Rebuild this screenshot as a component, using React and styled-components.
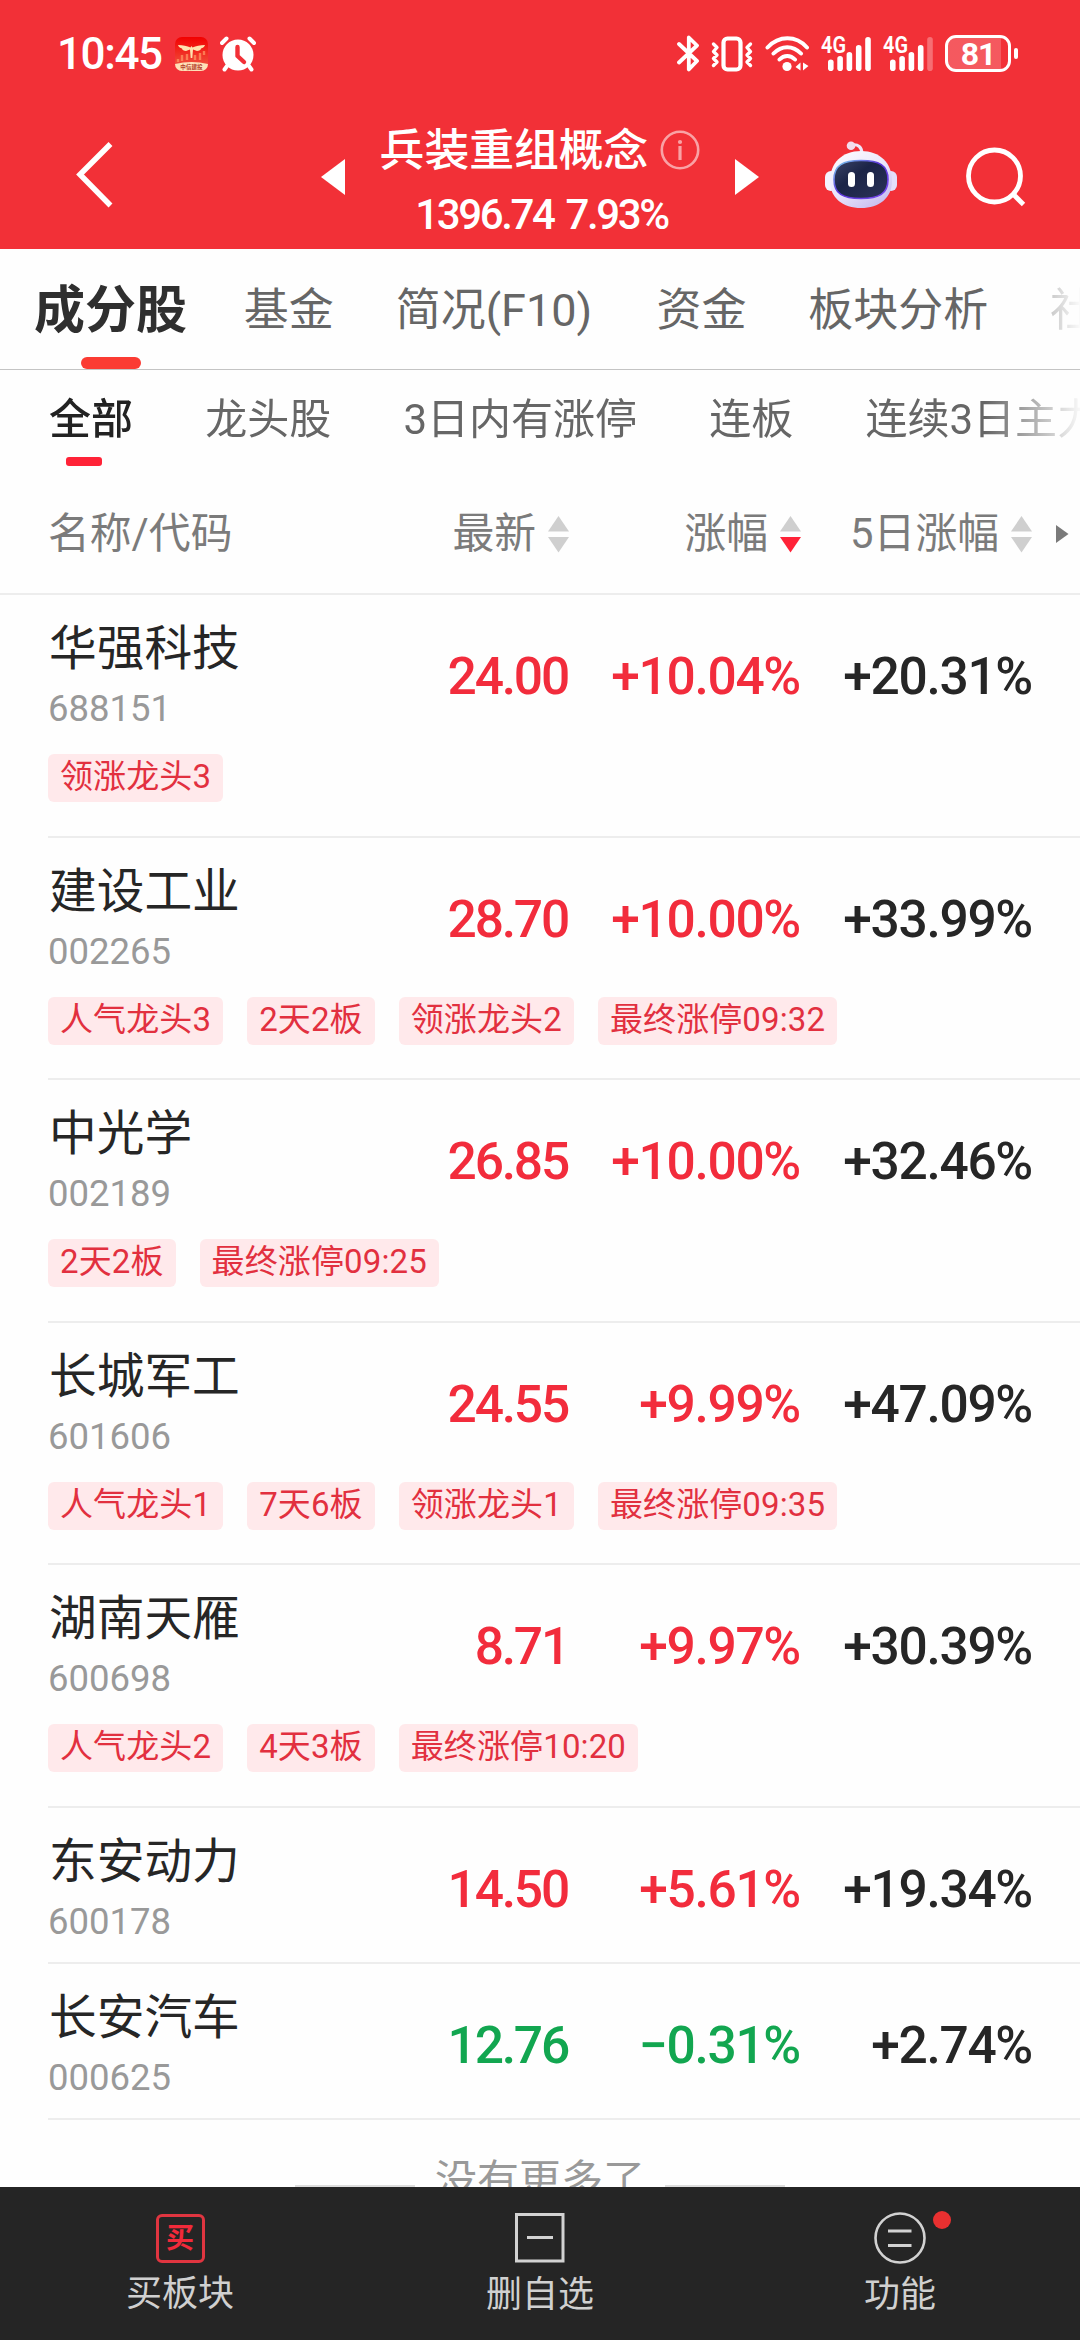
import styled, { createGlobalStyle } from "styled-components";
import { useState } from "react";

const tabs = [
  { label: "成分股", width: 153 },
  { label: "基金", width: 90 },
  { label: "简况(F10)", width: 199 },
  { label: "资金", width: 90 },
  { label: "板块分析", width: 180 },
  { label: "社区", width: 90 },
];

const filters = ["全部", "龙头股", "3日内有涨停", "连板", "连续3日主力净流入"];

const stocks = [
  {
    name: "华强科技",
    code: "688151",
    price: "24.00",
    change: "+10.04%",
    fiveDay: "+20.31%",
    tags: ["领涨龙头3"],
  },
  {
    name: "建设工业",
    code: "002265",
    price: "28.70",
    change: "+10.00%",
    fiveDay: "+33.99%",
    tags: ["人气龙头3", "2天2板", "领涨龙头2", "最终涨停09:32"],
  },
  {
    name: "中光学",
    code: "002189",
    price: "26.85",
    change: "+10.00%",
    fiveDay: "+32.46%",
    tags: ["2天2板", "最终涨停09:25"],
  },
  {
    name: "长城军工",
    code: "601606",
    price: "24.55",
    change: "+9.99%",
    fiveDay: "+47.09%",
    tags: ["人气龙头1", "7天6板", "领涨龙头1", "最终涨停09:35"],
  },
  {
    name: "湖南天雁",
    code: "600698",
    price: "8.71",
    change: "+9.97%",
    fiveDay: "+30.39%",
    tags: ["人气龙头2", "4天3板", "最终涨停10:20"],
  },
  {
    name: "东安动力",
    code: "600178",
    price: "14.50",
    change: "+5.61%",
    fiveDay: "+19.34%",
    tags: [],
  },
  {
    name: "长安汽车",
    code: "000625",
    price: "12.76",
    change: "−0.31%",
    fiveDay: "+2.74%",
    tags: [],
  },
];

export default function App() {
  const [activeTab, setActiveTab] = useState("成分股");
  const [activeFilter, setActiveFilter] = useState("全部");

  return (
    <StyledScreen>
      <GlobalStyle />
      <StyledHeader>
        <StatusBar />
        <StyledNav>
          <StyledNavLeft>
            <BackIcon />
          </StyledNavLeft>
          <StyledNavCenter>
            <TriangleIcon points="24,0 24,36 0,18" />
            <StyledTitleBlock>
              <StyledTitleRow>
                <StyledTitle>兵装重组概念</StyledTitle>
                <InfoIcon />
              </StyledTitleRow>
              <StyledIndexValue>1396.74 7.93%</StyledIndexValue>
            </StyledTitleBlock>
            <TriangleIcon points="0,0 24,18 0,36" />
          </StyledNavCenter>
          <StyledNavRight>
            <RobotIcon />
            <SearchIcon />
          </StyledNavRight>
        </StyledNav>
      </StyledHeader>

      <StyledTabs>
        {tabs.map((tab) => (
          <StyledTab
            key={tab.label}
            $width={tab.width}
            $active={tab.label === activeTab}
            onClick={() => setActiveTab(tab.label)}
          >
            {tab.label}
          </StyledTab>
        ))}
      </StyledTabs>

      <StyledFilters>
        {filters.map((filter) => (
          <StyledFilter
            key={filter}
            $active={filter === activeFilter}
            onClick={() => setActiveFilter(filter)}
          >
            {filter}
          </StyledFilter>
        ))}
      </StyledFilters>

      <StyledTableHead>
        <span>名称/代码</span>
        <StyledHeadCell>
          最新
          <SortIcon />
        </StyledHeadCell>
        <StyledHeadCell>
          涨幅
          <SortIcon descending />
        </StyledHeadCell>
        <StyledHeadCell>
          5日涨幅
          <SortIcon />
        </StyledHeadCell>
        <svg width="13" height="18" viewBox="0 0 13 18">
          <polygon points="0,0 12.5,9 0,18" fill="#7a7a7a" />
        </svg>
      </StyledTableHead>

      <StyledList>
        {stocks.map((stock) => (
          <StockRow key={stock.code} stock={stock} />
        ))}
        <StyledListEnd>没有更多了</StyledListEnd>
      </StyledList>

      <StyledBottomBar>
        <StyledAction>
          <StyledBuyIcon>买</StyledBuyIcon>
          <StyledActionLabel>买板块</StyledActionLabel>
        </StyledAction>
        <StyledAction>
          <svg width="52" height="52" viewBox="0 0 52 52" fill="none">
            <rect x="2.5" y="2.5" width="46.5" height="46.5" stroke="#d2d2d2" strokeWidth="3" />
            <path d="M13 25.5H39" stroke="#d2d2d2" strokeWidth="3" />
          </svg>
          <StyledActionLabel>删自选</StyledActionLabel>
        </StyledAction>
        <StyledAction>
          <StyledIconWithDot>
            <svg width="52" height="52" viewBox="0 0 52 52" fill="none">
              <circle cx="26" cy="26" r="24.5" stroke="#d2d2d2" strokeWidth="2.6" />
              <path d="M14 19H37.5M14 33.5H37.5" stroke="#d2d2d2" strokeWidth="3" />
            </svg>
          </StyledIconWithDot>
          <StyledActionLabel>功能</StyledActionLabel>
        </StyledAction>
      </StyledBottomBar>
    </StyledScreen>
  );
}

function StockRow({ stock }) {
  const color = stock.change.startsWith("+") ? "#f22c3c" : "#12a650";

  return (
    <StyledRow $tall={stock.tags.length > 0}>
      <StyledQuote>
        <div>
          <StyledName>{stock.name}</StyledName>
          <StyledCode>{stock.code}</StyledCode>
        </div>
        <StyledPrice $color={color}>{stock.price}</StyledPrice>
        <StyledNumber $color={color}>{stock.change}</StyledNumber>
        <StyledNumber>{stock.fiveDay}</StyledNumber>
      </StyledQuote>
      {stock.tags.length > 0 ? (
        <StyledTags>
          {stock.tags.map((tag) => (
            <StyledTag key={tag}>{tag}</StyledTag>
          ))}
        </StyledTags>
      ) : null}
    </StyledRow>
  );
}

function StatusBar() {
  return (
    <StyledStatusBar>
      <StyledStatusGroup>
        <StyledClock>10:45</StyledClock>
        <AppBadgeIcon />
        <AlarmIcon />
      </StyledStatusGroup>
      <StyledStatusGroup>
        <BluetoothIcon />
        <VibrateIcon />
        <WifiIcon />
        <SignalIcon level={5} />
        <SignalIcon level={4} />
        <StyledBattery>
          <StyledBatteryBody>81</StyledBatteryBody>
          <StyledBatteryNub />
        </StyledBattery>
      </StyledStatusGroup>
    </StyledStatusBar>
  );
}

function AppBadgeIcon() {
  return (
    <svg width="33" height="34" viewBox="0 0 33 34">
      <defs>
        <linearGradient id="badge" x1="0" y1="0" x2="0" y2="1">
          <stop offset="0" stopColor="#f20000" />
          <stop offset="1" stopColor="#f0604a" />
        </linearGradient>
        <clipPath id="badgeClip">
          <rect width="33" height="34" rx="7" />
        </clipPath>
      </defs>
      <g clipPath="url(#badgeClip)">
        <rect width="33" height="34" fill="url(#badge)" />
        <path
          d="M3 8C8 8 12 9 15.5 10.5L16.5 9L17.5 10.5C21 9 25 8 30 8C29.5 10 28 11 26 11.5C26 13 24 14 22 14L18 12.5L17.3 21H15.7L15 12.5L11 14C9 14 7 13 7 11.5C5 11 3.5 10 3 8Z"
          fill="#ffe3b0"
        />
        <path
          d="M3 22V25M7 18V24M12 17V23M20 18V23M25 16V23M29 14V18"
          stroke="#ff9a66"
          strokeWidth="2.4"
          opacity="0.7"
        />
        <path d="M0 27Q16.5 23 33 27V34H0Z" fill="#ffe0b8" />
        <text
          x="16.5"
          y="32"
          textAnchor="middle"
          fontSize="5.6"
          fontWeight="700"
          fontFamily="Noto Sans CJK SC, sans-serif"
          fill="#b5402c"
        >
          中信建投
        </text>
      </g>
    </svg>
  );
}

function AlarmIcon() {
  return (
    <svg width="36" height="36" viewBox="0 0 36 36" fill="none" strokeLinecap="round">
      <circle cx="18" cy="19" r="15.5" fill="#fff" />
      <path d="M2 7L6.5 2.5M34 7L29.5 2.5" stroke="#fff" strokeWidth="4" />
      <path d="M7 30L4.5 33.5M29 30L31.5 33.5" stroke="#fff" strokeWidth="4" />
      <path d="M17.5 11V20L24 26" stroke="#f23037" strokeWidth="4.4" strokeLinejoin="round" />
    </svg>
  );
}

function BluetoothIcon() {
  return (
    <svg width="22" height="37" viewBox="0 0 22 37" fill="none">
      <path
        d="M2 9L20 26L11.8 34.5V2.5L20 10.5L2 27.5"
        stroke="#fff"
        strokeWidth="3.8"
        strokeLinecap="round"
        strokeLinejoin="round"
      />
    </svg>
  );
}

function VibrateIcon() {
  return (
    <svg width="42" height="36" viewBox="0 0 42 36" fill="none" stroke="#fff">
      <rect x="12.5" y="2.5" width="17" height="31" rx="4" strokeWidth="4.2" />
      <path
        d="M2.5 8L6 11.5L2.5 15.5L6 19L2.5 22.5L6 26L2.5 29.5M39.5 8L36 11.5L39.5 15.5L36 19L39.5 22.5L36 26L39.5 29.5"
        strokeWidth="3.4"
        strokeLinecap="round"
        strokeLinejoin="round"
      />
    </svg>
  );
}

function WifiIcon() {
  return (
    <svg width="44" height="36" viewBox="0 0 44 36" fill="none" strokeLinecap="round">
      <path
        d="M2.5 11.5C14 -0.7 31 -0.7 42 11.5M8.5 17.5C16.5 9 28 9 36 17.5M14.5 23.5C19 18.7 25.5 18.7 30 23.5"
        stroke="#fff"
        strokeWidth="4"
      />
      <circle cx="22" cy="30.5" r="4.6" fill="#fff" />
      <path d="M35.5 26.5V34.5L30.5 31Z M38 26.5V34.5L43.5 30Z" fill="#fff" />
    </svg>
  );
}

function SignalIcon({ level }) {
  const tops = [23.5, 20, 16, 9, 1];

  return (
    <StyledSignal width="50" height="36" viewBox="0 0 50 36">
      <text
        x="0"
        y="17"
        fontFamily="Roboto, sans-serif"
        fontSize="23.5"
        fontWeight="600"
        textLength="25"
        lengthAdjust="spacingAndGlyphs"
        fill="#fff"
      >
        4G
      </text>
      {tops.map((top, i) => (
        <rect
          key={top}
          x={7 + i * 9.3}
          y={top}
          width="5.6"
          height={35 - top}
          rx="2.8"
          fill="#fff"
          opacity={i < level ? 1 : 0.3}
        />
      ))}
    </StyledSignal>
  );
}

function BackIcon() {
  return (
    <svg width="38" height="66" viewBox="0 0 38 66" fill="none">
      <path d="M34.5 2L4 32.5L34.5 63.5" stroke="#fff" strokeWidth="5.5" />
    </svg>
  );
}

function TriangleIcon({ points }) {
  return (
    <StyledTriangle width="24" height="36" viewBox="0 0 24 36">
      <polygon points={points} fill="#fff" />
    </StyledTriangle>
  );
}

function InfoIcon() {
  return (
    <svg width="40" height="40" viewBox="0 0 40 40" fill="none" opacity="0.55">
      <circle cx="20" cy="20" r="18.2" stroke="#fff" strokeWidth="2.6" />
      <path d="M20 16V30" stroke="#fff" strokeWidth="3.2" />
      <circle cx="20" cy="12" r="2.1" fill="#fff" />
    </svg>
  );
}

function RobotIcon() {
  return (
    <svg width="72" height="68" viewBox="0 0 72 68" fill="none">
      <defs>
        <linearGradient id="shell" x1="0" y1="0" x2="0.7" y2="1">
          <stop offset="0" stopColor="#ffffff" />
          <stop offset="0.6" stopColor="#e9e4fb" />
          <stop offset="1" stopColor="#c9bff0" />
        </linearGradient>
        <linearGradient id="visorEdge" x1="0" y1="0" x2="1" y2="1">
          <stop offset="0" stopColor="#7fd8f0" />
          <stop offset="0.45" stopColor="#5a35d8" />
          <stop offset="1" stopColor="#7a4af0" />
        </linearGradient>
        <linearGradient id="visor" x1="0" y1="0" x2="1" y2="1">
          <stop offset="0" stopColor="#3c4468" />
          <stop offset="0.4" stopColor="#1b2447" />
          <stop offset="1" stopColor="#2b3358" />
        </linearGradient>
      </defs>
      <path d="M27 4C33 3 37 6 37 13" stroke="#efe6f8" strokeWidth="3" />
      <circle cx="26" cy="4.8" r="4.3" fill="#f3dcec" />
      <rect x="0" y="30" width="12" height="20" rx="6" fill="#f4f3ff" />
      <rect x="60" y="30" width="12" height="20" rx="6" fill="#e3defa" />
      <path
        d="M36 10C55 10 67 22 67 40C67 57 54 67 36 67C18 67 5 57 5 40C5 22 17 10 36 10Z"
        fill="url(#shell)"
      />
      <path
        d="M36 19.5C54 19.5 63 24 63 38.5C63 53 54 57.5 36 57.5C18 57.5 9 53 9 38.5C9 24 18 19.5 36 19.5Z"
        fill="url(#visor)"
        stroke="url(#visorEdge)"
        strokeWidth="1.6"
      />
      <rect x="23" y="31" width="7" height="15" rx="3.5" fill="#fff" />
      <rect x="42" y="31" width="7" height="15" rx="3.5" fill="#fff" />
    </svg>
  );
}

function SearchIcon() {
  return (
    <svg width="60" height="60" viewBox="0 0 60 60" fill="none" stroke="#fff">
      <circle cx="28.5" cy="29" r="26" strokeWidth="4.8" />
      <path d="M47.5 47.5L57.5 57.5" strokeWidth="4.8" />
    </svg>
  );
}

function SortIcon({ descending }) {
  return (
    <svg width="21" height="37" viewBox="0 0 21 37">
      <polygon points="10.5,0 21,15.5 0,15.5" fill="#cfcfcf" />
      <polygon points="0,21 21,21 10.5,36.5" fill={descending ? "#ff2338" : "#cfcfcf"} />
    </svg>
  );
}

const GlobalStyle = createGlobalStyle`
  * {
    box-sizing: border-box;
  }
  body {
    margin: 0;
    background-color: #fefefe;
    font-family: Roboto, "Noto Sans CJK SC", sans-serif;
  }
  svg {
    display: block;
    flex-shrink: 0;
  }
`;

const StyledScreen = styled.div`
  display: flex;
  flex-direction: column;
  width: 1080px;
  height: 2340px;
  overflow: hidden;
  background-color: #fefefe;
`;

const StyledHeader = styled.header`
  height: 249px;
  background-color: #f23037;
  color: #fff;
`;

const StyledStatusBar = styled.div`
  display: flex;
  justify-content: space-between;
  align-items: center;
  height: 107px;
  padding: 0 62px 0 57px;
`;

const StyledStatusGroup = styled.div`
  display: flex;
  align-items: center;
  gap: 12px;
`;

const StyledClock = styled.span`
  width: 106px;
  font-size: 44px;
  font-weight: 500;
  line-height: 46px;
  letter-spacing: -1.4px;
`;

const StyledSignal = styled.svg`
  overflow: visible;
`;

const StyledBattery = styled.div`
  display: flex;
  align-items: center;
  gap: 3px;
`;

const StyledBatteryBody = styled.div`
  width: 66px;
  height: 37px;
  border: 3px solid #fff;
  border-radius: 11px;
  background: linear-gradient(
    to right,
    rgba(255, 255, 255, 0.2) 53px,
    transparent 53px
  );
  font-size: 32px;
  font-weight: 700;
  line-height: 32px;
  letter-spacing: -1px;
  text-align: center;
`;

const StyledBatteryNub = styled.div`
  width: 4px;
  height: 11px;
  border-radius: 2px;
  background-color: #fff;
`;

const StyledNav = styled.nav`
  display: grid;
  grid-template-columns: 321px 438px 1fr;
  height: 141px;
`;

const StyledNavLeft = styled.div`
  padding: 35px 0 0 76px;
`;

const StyledNavCenter = styled.div`
  display: flex;
  justify-content: space-between;
`;

const StyledTriangle = styled.svg`
  margin-top: 52px;
`;

const StyledTitleBlock = styled.div`
  display: flex;
  flex-direction: column;
  align-items: center;
  padding-top: 18px;
`;

const StyledTitleRow = styled.div`
  display: flex;
  align-items: center;
  gap: 12px;
  height: 50px;
`;

const StyledTitle = styled.h1`
  margin: 0;
  font-size: 44.8px;
  font-weight: 500;
  line-height: 51px;
`;

const StyledIndexValue = styled.span`
  margin: 15px 0 0 3px;
  font-size: 42px;
  font-weight: 500;
  line-height: 50px;
  letter-spacing: -2.4px;
  word-spacing: 4px;
  white-space: nowrap;
`;

const StyledNavRight = styled.div`
  display: flex;
  gap: 69px;
  padding: 34px 0 0 66px;

  svg:last-child {
    margin-top: 6px;
  }
`;

const StyledTabs = styled.div`
  display: flex;
  gap: 61.8px;
  height: 121px;
  padding-left: 34px;
  border-bottom: 1px solid #c4c4c4;
  overflow: hidden;
`;

const StyledTab = styled.div`
  flex: 0 0 ${(props) => props.$width}px;
  position: relative;
  color: ${(props) => (props.$active ? "#2f2f2f" : "#666")};
  font-size: ${(props) => (props.$active ? 51 : 45)}px;
  font-weight: ${(props) => (props.$active ? 700 : 400)};
  line-height: 123px;
  white-space: nowrap;
  margin-right: ${(props) => (props.$active ? "-5px" : 0)};

  &:last-child {
    mask-image: linear-gradient(to right, rgba(0, 0, 0, 0.35), transparent 32px);
  }

  &::after {
    content: "";
    display: ${(props) => (props.$active ? "block" : "none")};
    position: absolute;
    left: calc(50% - 30px);
    bottom: 0;
    width: 60px;
    height: 12px;
    border-radius: 6px;
    background-color: #fb3b33;
  }
`;

const StyledFilters = styled.div`
  display: flex;
  gap: 72.2px;
  height: 122px;
  padding-left: 49px;
  overflow: hidden;
  mask-image: linear-gradient(to right, #000 985px, transparent 1084px);
`;

const StyledFilter = styled.div`
  flex-shrink: 0;
  position: relative;
  color: ${(props) => (props.$active ? "#222" : "#666")};
  font-size: 42px;
  font-weight: ${(props) => (props.$active ? 500 : 400)};
  line-height: 99px;
  white-space: nowrap;

  &::after {
    content: "";
    display: ${(props) => (props.$active ? "block" : "none")};
    position: absolute;
    left: calc(50% - 25px);
    top: 87px;
    width: 36px;
    height: 9px;
    border-radius: 3px;
    background-color: #ff2337;
  }
`;

const StyledTableHead = styled.div`
  display: grid;
  grid-template-columns: 400px 121px 232px 231px 13px;
  align-items: center;
  height: 103px;
  padding: 0 0 17px 48px;
  border-bottom: 2px solid #ededed;
  color: #7b7b7b;
  font-size: 41.8px;
  line-height: 60px;

  > svg {
    margin-left: 24px;
  }
`;

const StyledHeadCell = styled.div`
  display: flex;
  justify-content: flex-end;
  align-items: center;
  gap: 12px;
  white-space: nowrap;
`;

const StyledList = styled.main`
  flex: 1;
  min-height: 0;
  overflow: hidden;
`;

const StyledRow = styled.section`
  height: ${(props) => (props.$tall ? 242.5 : 156)}px;
  margin-left: 48px;
  padding-top: 24px;
  border-bottom: 2px solid #ededed;
`;

const StyledQuote = styled.div`
  display: grid;
  grid-template-columns: 290px 230px 232px 232px;
  height: 114px;
`;

const StyledName = styled.div`
  padding-left: 1px;
  color: #262626;
  font-size: 47.7px;
  line-height: 60px;
`;

const StyledCode = styled.div`
  margin-top: 7px;
  color: #999;
  font-size: 36.5px;
  line-height: 46px;
`;

const StyledNumber = styled.span`
  margin-top: 28px;
  color: ${(props) => props.$color || "#262626"};
  font-size: 51.5px;
  font-weight: 500;
  line-height: 60px;
  letter-spacing: -1.3px;
  text-align: right;
`;

const StyledPrice = styled(StyledNumber)`
  letter-spacing: -2.2px;
`;

const StyledTags = styled.div`
  display: flex;
  gap: 24px;
  margin-top: 21px;
`;

const StyledTag = styled.span`
  height: 48px;
  padding: 0 12px;
  border-radius: 6px;
  background-color: #ffe9eb;
  color: #e2303f;
  font-size: 33px;
  line-height: 46px;
  letter-spacing: 0.12px;
  white-space: nowrap;
`;

const StyledListEnd = styled.div`
  display: flex;
  justify-content: center;
  align-items: center;
  gap: 20px;
  margin-top: 26px;
  color: #999;
  font-size: 42px;
  line-height: 70px;

  &::before,
  &::after {
    content: "";
    width: 120px;
    height: 2px;
    margin-top: 11px;
    background-color: #ddd;
  }
`;

const StyledBottomBar = styled.footer`
  display: grid;
  grid-template-columns: repeat(3, 1fr);
  height: 153px;
  background-color: #252525;
`;

const StyledAction = styled.div`
  display: flex;
  flex-direction: column;
  align-items: center;
  padding-top: 25px;
`;

const StyledIconWithDot = styled.div`
  position: relative;

  &::after {
    content: "";
    position: absolute;
    top: -1px;
    right: -25px;
    width: 18px;
    height: 18px;
    border-radius: 50%;
    background-color: #e93030;
  }
`;

const StyledBuyIcon = styled.div`
  width: 49px;
  height: 49px;
  margin: 2px 0 0;
  border: 3px solid #e03540;
  border-radius: 6px;
  color: #f22a3a;
  font-size: 28px;
  font-weight: 700;
  line-height: 44px;
  text-align: center;
`;

const StyledActionLabel = styled.span`
  margin-top: 3px;
  color: #d0d0d0;
  font-size: 36px;
  line-height: 56px;
`;
